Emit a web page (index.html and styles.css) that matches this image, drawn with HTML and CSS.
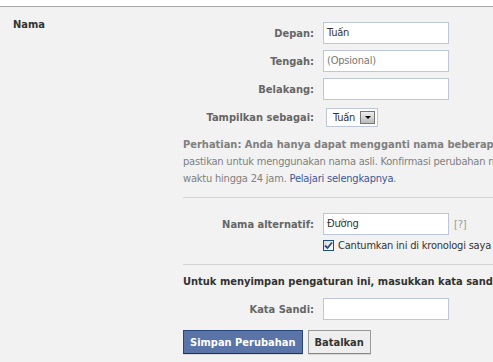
FILE: index.html
```html
<!DOCTYPE html>
<html>
<head>
<meta charset="utf-8">
<link rel="stylesheet" href="styles.css">
</head>
<body>
<div class="top"></div>
<div class="section">
  <div class="side">Nama</div>
  <div class="main">
    <div class="row">
      <label class="lbl">Depan:</label>
      <div class="input">Tuấn</div>
    </div>
    <div class="row">
      <label class="lbl">Tengah:</label>
      <div class="input placeholder">(Opsional)</div>
    </div>
    <div class="row">
      <label class="lbl">Belakang:</label>
      <div class="input"></div>
    </div>
    <div class="row">
      <label class="lbl">Tampilkan sebagai:</label>
      <div class="select"><span class="sel-text">Tuấn</span><span class="sel-btn"><span class="tri"></span></span></div>
    </div>
    <p class="notice"><b>Perhatian: Anda hanya dapat mengganti nama beberapa kali, jadi</b><br>pastikan untuk menggunakan nama asli. Konfirmasi perubahan nama membutuhkan<br>waktu hingga 24 jam. <a href="#">Pelajari selengkapnya</a>.</p>
    <div class="sep"></div>
    <div class="row alt">
      <label class="lbl">Nama alternatif:</label>
      <div class="input">Đường</div>
      <span class="help">[?]</span>
    </div>
    <div class="check-row">
      <span class="cb"><svg width="9" height="9" viewBox="0 0 9 9"><path d="M1 4.5 L3.5 7 L8 1.5" fill="none" stroke="#2a4c8c" stroke-width="1.8"/></svg></span>
      <span>Cantumkan ini di kronologi saya</span>
    </div>
    <div class="sep sep2"></div>
    <div class="heading">Untuk menyimpan pengaturan ini, masukkan kata sandi Anda.</div>
    <div class="row pw">
      <label class="lbl">Kata Sandi:</label>
      <div class="input"></div>
    </div>
    <div class="buttons">
      <button class="btn primary">Simpan Perubahan</button>
      <button class="btn">Batalkan</button>
    </div>
  </div>
</div>
</body>
</html>
```

FILE: styles.css
```css
html, body {
  margin: 0;
  padding: 0;
  overflow: hidden;
  height: 362px;
}
body {
  background: #f2f2f2;
  font-family: "DejaVu Sans Condensed", "Liberation Sans", sans-serif;
  font-size: 11px;
  color: #333;
  letter-spacing: -0.2px;
}
b, .lbl, .side, .heading, .btn {
  letter-spacing: 0;
}
.top {
  height: 6px;
  background: #fff;
  border-bottom: 1px solid #a9a9a9;
}
.section {
  display: flex;
  padding-left: 13px;
}
.side {
  width: 170px;
  flex: none;
  font-weight: bold;
  color: #333;
  padding-top: 11px;
  line-height: 14px;
}
.main {
  flex: 1;
  padding-top: 15px;
  min-width: 0;
}
.row {
  display: flex;
  align-items: center;
  height: 22px;
  margin-bottom: 6px;
}
.lbl {
  width: 131px;
  text-align: right;
  margin-right: 9px;
  font-weight: bold;
  color: #666;
  flex: none;
}
.input {
  box-sizing: border-box;
  width: 126px;
  height: 22px;
  background: #fff;
  border: 1px solid #bdc7d8;
  padding: 0 3px;
  line-height: 20px;
  color: #333;
  flex: none;
}
.placeholder {
  color: #777;
}
.select {
  display: flex;
  align-items: center;
  box-sizing: border-box;
  height: 19px;
  margin-left: 3px;
  border: 1px solid #bdc7d8;
  background: #fff;
  padding: 0 2px 0 6px;
}
.sel-text {
  margin-right: 5px;
}
.sel-btn {
  display: flex;
  align-items: center;
  justify-content: center;
  box-sizing: border-box;
  width: 15px;
  height: 13px;
  border: 1px solid #777;
  background: linear-gradient(#eee, #bbb);
}
.tri {
  width: 0;
  height: 0;
  border-left: 3px solid transparent;
  border-right: 3px solid transparent;
  border-top: 3px solid #000;
}
.notice {
  margin: 8px 0 0;
  line-height: 17px;
  color: #808080;
  white-space: nowrap;
}
.notice a {
  color: #3b5998;
  text-decoration: none;
}
.sep {
  height: 1px;
  background: #d3d3d3;
  margin-top: 10px;
}
.alt {
  margin-top: 15px;
  margin-bottom: 4px;
}
.help {
  color: #999;
  margin-left: 5px;
}
.check-row {
  display: flex;
  align-items: center;
  height: 13px;
  padding-left: 140px;
  color: #333;
  white-space: nowrap;
}
.cb {
  box-sizing: border-box;
  width: 11px;
  height: 11px;
  border: 1px solid #1c5180;
  background: linear-gradient(135deg, #dcdcd6, #fff);
  display: flex;
  align-items: center;
  justify-content: center;
  margin-right: 4px;
}
.sep2 {
  margin-top: 12px;
}
.heading {
  margin-top: 10px;
  line-height: 14px;
  font-weight: bold;
  color: #333;
  white-space: nowrap;
}
.pw {
  margin-top: 9px;
  margin-bottom: 10px;
}
.buttons {
  display: flex;
  gap: 5px;
}
.btn {
  box-sizing: border-box;
  height: 24px;
  padding: 0 6px;
  font-family: inherit;
  font-size: 11px;
  font-weight: bold;
  color: #333;
  background: #eee;
  border: 1px solid #999;
  border-bottom-color: #888;
  box-shadow: 0 1px 0 rgba(0,0,0,0.1);
  margin: 0;
}
.btn.primary {
  color: #fff;
  background: #5b74a8;
  border-color: #29447e #29447e #1a356e;
}
```
